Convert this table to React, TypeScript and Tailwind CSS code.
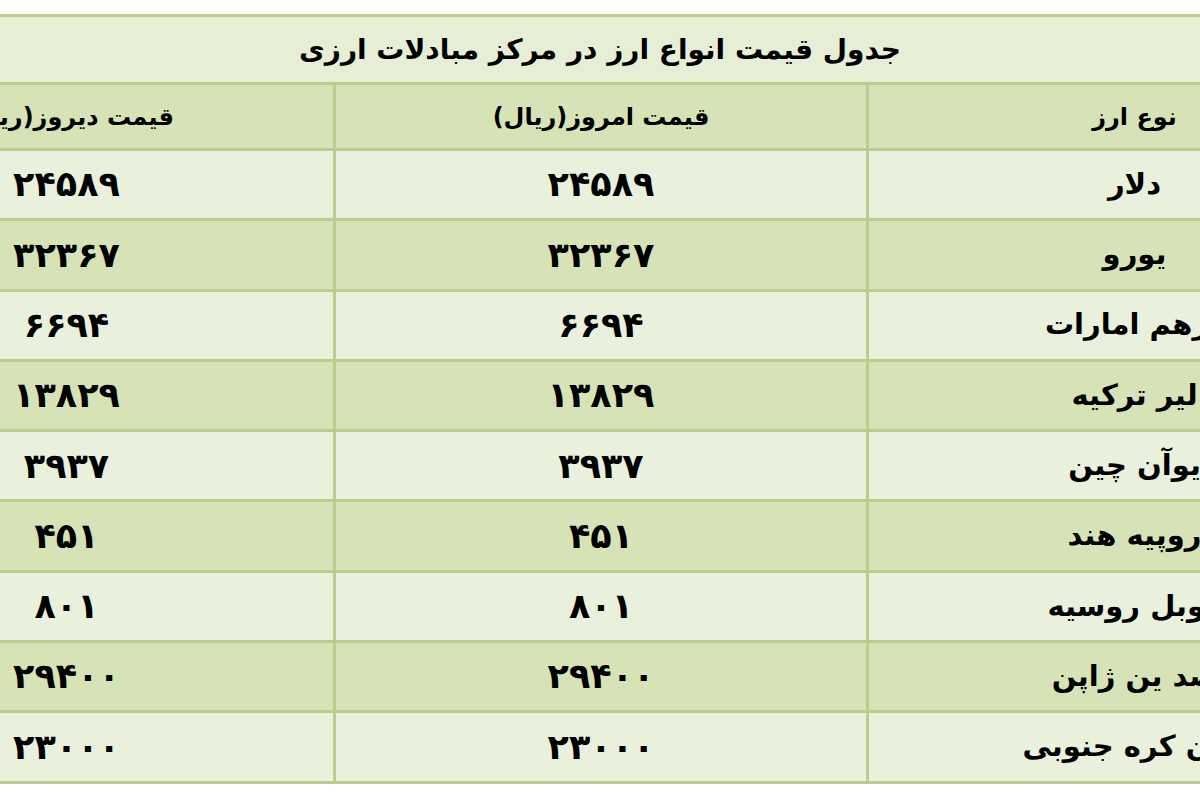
import React from "react";

const rows: [string, string, string][] = [
  ["دلار", "۲۴۵۸۹", "۲۴۵۸۹"],
  ["یورو", "۳۲۳۶۷", "۳۲۳۶۷"],
  ["درهم امارات", "۶۶۹۴", "۶۶۹۴"],
  ["لیر ترکیه", "۱۳۸۲۹", "۱۳۸۲۹"],
  ["یوآن چین", "۳۹۳۷", "۳۹۳۷"],
  ["روپیه هند", "۴۵۱", "۴۵۱"],
  ["روبل روسیه", "۸۰۱", "۸۰۱"],
  ["صد ین ژاپن", "۲۹۴۰۰", "۲۹۴۰۰"],
  ["وون کره جنوبی", "۲۳۰۰۰", "۲۳۰۰۰"],
];

export default function App() {
  return (
    <div
      className="w-[1200px] h-[800px] bg-white overflow-hidden flex justify-center pt-[14px]"
      style={{ fontFamily: '"DejaVu Sans", "Noto Sans", sans-serif' }}
    >
      <div dir="rtl" className="w-[1600px] shrink-0 flex flex-col border-t-[3px] border-[#b9cd8f] text-black font-bold self-start">
        <div className="h-[68px] bg-[#e6eed5] border-b-[3px] border-[#b9cd8f] flex items-center justify-center text-[28px] tracking-[-0.5px]">
          جدول قیمت انواع ارز در مرکز مبادلات ارزی
        </div>
        <div className="h-[66px] bg-[#d5e3b7] border-b-[3px] border-[#b9cd8f] flex text-[24px]">
          <div className="w-[534px] flex items-center justify-center border-l-[3px] border-[#b9cd8f]">نوع ارز</div>
          <div className="w-[533px] flex items-center justify-center border-l-[3px] border-[#b9cd8f]">قیمت امروز(ریال)</div>
          <div className="w-[533px] flex items-center justify-center">قیمت دیروز(ریال)</div>
        </div>
        {rows.map((r, i) => (
          <div
            key={i}
            className={
              "h-[70.3px] border-b-[3px] border-[#b9cd8f] flex " +
              (i % 2 === 0 ? "bg-[#e9f0dc]" : "bg-[#d5e3b7]")
            }
          >
            <div className="w-[534px] flex items-center justify-center border-l-[3px] border-[#b9cd8f] text-[29px]">{r[0]}</div>
            <div className="w-[533px] flex items-center justify-center border-l-[3px] border-[#b9cd8f] text-[35px]">{r[1]}</div>
            <div className="w-[533px] flex items-center justify-center text-[35px]">{r[2]}</div>
          </div>
        ))}
      </div>
    </div>
  );
}
